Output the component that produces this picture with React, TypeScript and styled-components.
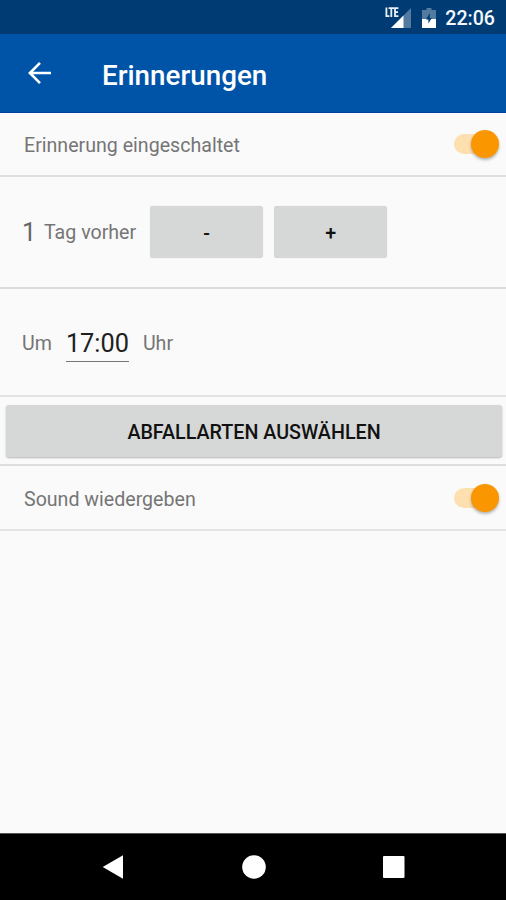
import React, { useState } from "react";
import styled, { createGlobalStyle } from "styled-components";

const GlobalStyle = createGlobalStyle`
  * { box-sizing: border-box; }
  body { margin: 0; background: #fafafa; font-family: Roboto, "Liberation Sans", sans-serif; }
  button, input { font-family: inherit; border: 0; padding: 0; margin: 0; }
`;

const Screen = styled.div`
  width: 506px;
  height: 900px;
  display: flex;
  flex-direction: column;
  overflow: hidden;
  background: #fafafa;
`;

const StatusBar = styled.header`
  height: 34px;
  flex: none;
  display: flex;
  justify-content: flex-end;
  align-items: center;
  padding: 2px 11px 0 0;
  background: #003b73;
  color: #f4f8fc;
`;

const Clock = styled.span`
  font-size: 19.6px;
  font-weight: 500;
  line-height: 24px;
  margin: 2px 0 0 9px;
`;

const Toolbar = styled.div`
  height: 79px;
  flex: none;
  display: flex;
  align-items: center;
  padding-left: 27px;
  background: #0054a8;
  border-bottom: 1px solid #004299;
`;

const BackButton = styled.button`
  display: flex;
  width: 24px;
  height: 24px;
  background: none;
`;

const Title = styled.h1`
  margin: 5px 0 0 51px;
  font-size: 27.8px;
  font-weight: 500;
  line-height: 34px;
  color: #fff;
`;

const Main = styled.main`
  flex: 1;
  display: flex;
  flex-direction: column;
`;

const Row = styled.section<{ $height: number; $line: string }>`
  height: ${(p) => p.$height}px;
  flex: none;
  display: flex;
  align-items: center;
  border-bottom: 2px solid ${(p) => p.$line};
`;

const SwitchRow = styled(Row)`
  justify-content: space-between;
  padding: 0 7px 0 24px;
`;

const FieldRow = styled(Row)`
  padding-left: 22px;
`;

const ActionRow = styled(Row)`
  padding: 0 4px 0 6px;
`;

const Label = styled.span<{ $gap?: number; $drop?: number }>`
  font-size: 19.6px;
  line-height: 24px;
  color: #757575;
  margin-left: ${(p) => p.$gap ?? 0}px;
  padding-top: ${(p) => p.$drop ?? 2}px;
  white-space: nowrap;
`;

const DayCount = styled.span`
  width: 14px;
  padding-top: 2px;
  font-size: 25.3px;
  line-height: 30px;
  color: #666;
`;

const TimeValue = styled.button`
  width: 63px;
  height: 34px;
  margin: 5px 0 0 14px;
  background: none;
  border-bottom: 1px solid #777;
  font-size: 25.3px;
  line-height: 30px;
  color: #202020;
  white-space: nowrap;
`;

const RaisedButton = styled.button`
  height: 52px;
  padding-top: 3px;
  border-radius: 3px;
  background: #d6d8d7;
  box-shadow: 0 1px 2px rgba(0, 0, 0, 0.28);
  font-size: 19.7px;
  font-weight: 500;
  line-height: 24px;
  color: #111;
`;

const StepButton = styled(RaisedButton)`
  width: 113px;
  box-shadow: 0 0 1px rgba(0, 0, 0, 0.18);
`;

const Stepper = styled.div`
  display: flex;
  gap: 11px;
  margin-left: 14px;
`;

const WideButton = styled(RaisedButton)`
  flex: 1;
  padding-top: 4px;
`;

const Track = styled.button`
  display: flex;
  align-items: center;
  justify-content: flex-end;
  width: 45px;
  height: 20px;
  border-radius: 10px;
  background: #fddfb0;
`;

const Thumb = styled.span`
  width: 28px;
  height: 28px;
  flex: none;
  border-radius: 50%;
  background: #fa9600;
  box-shadow: 0 2px 3px rgba(0, 0, 0, 0.28);
`;

const NavBar = styled.nav`
  height: 67px;
  flex: none;
  display: flex;
  align-items: center;
  justify-content: space-between;
  padding: 0 101px 0 102px;
  background: #000;
  border-top: 1px solid #555;
`;

const NavButton = styled.button`
  display: flex;
  background: none;
`;

const StatusIcons = styled.div`
  display: flex;
  gap: 11px;
`;

function Toggle({ label }: { label: string }) {
  return (
    <Track role="switch" aria-checked="true" aria-label={label}>
      <Thumb />
    </Track>
  );
}

function SignalIcon() {
  return (
    <svg width="26" height="22" viewBox="0 0 26 22">
      <path d="M26 1V21H6Z" fill="#537a9f" />
      <path d="M18.5 8.5V21H6Z" fill="#fff" />
      <path d="M0 0H14V10.5H0Z" fill="#003b73" />
      <path
        d="M1.4 .5V9.2H4.4M3.6 1.2H9M6.3 1.2V10M13.4 1.2H10V9.2H13.4M10 5.2H13"
        fill="none"
        stroke="#e8f1f8"
        strokeWidth="1.8"
      />
    </svg>
  );
}

function BatteryIcon() {
  return (
    <svg width="14" height="22" viewBox="0 0 14 22">
      <path d="M4.5 1H9.5V3H14V12H0V3H4.5Z" fill="#537a9f" />
      <path d="M0 12H14V21H0Z" fill="#fff" />
      <path d="M7.8 6L4 12.6H6.4V16.5L9.8 11H7.8Z" fill="#003b73" />
    </svg>
  );
}

export default function App() {
  const [days, setDays] = useState(1);

  return (
    <>
      <GlobalStyle />
      <Screen>
        <StatusBar>
          <StatusIcons>
            <SignalIcon />
            <BatteryIcon />
          </StatusIcons>
          <Clock>22:06</Clock>
        </StatusBar>
        <Toolbar>
          <BackButton aria-label="Zurück">
            <svg width="24" height="24" viewBox="0 0 24 24" fill="none" stroke="#fff" strokeWidth="2.6">
              <path d="M24 12H3M13 1.9L2.9 12L13 22.1" />
            </svg>
          </BackButton>
          <Title>Erinnerungen</Title>
        </Toolbar>
        <Main>
          <SwitchRow $height={64} $line="#dedede">
            <Label $drop={4}>Erinnerung eingeschaltet</Label>
            <Toggle label="Erinnerung eingeschaltet" />
          </SwitchRow>
          <FieldRow $height={112} $line="#dadada">
            <DayCount>{days}</DayCount>
            <Label $gap={8}>Tag vorher</Label>
            <Stepper>
              <StepButton onClick={() => setDays(Math.max(0, days - 1))}>-</StepButton>
              <StepButton onClick={() => setDays(days + 1)}>+</StepButton>
            </Stepper>
          </FieldRow>
          <FieldRow $height={108} $line="#e4e4e4">
            <Label $drop={3}>Um</Label>
            <TimeValue>17:00</TimeValue>
            <Label $gap={14} $drop={3}>Uhr</Label>
          </FieldRow>
          <ActionRow $height={69} $line="#dedede">
            <WideButton>ABFALLARTEN AUSWÄHLEN</WideButton>
          </ActionRow>
          <SwitchRow $height={65} $line="#e4e4e4">
            <Label $drop={4}>Sound wiedergeben</Label>
            <Toggle label="Sound wiedergeben" />
          </SwitchRow>
        </Main>
        <NavBar>
          <NavButton aria-label="Zurück">
            <svg width="22" height="26" viewBox="0 0 22 26">
              <path d="M21 1.2V24.8L.7 13Z" fill="#fff" />
            </svg>
          </NavButton>
          <NavButton aria-label="Startseite">
            <svg width="24" height="24" viewBox="0 0 24 24">
              <circle cx="12" cy="12" r="11.8" fill="#fff" />
            </svg>
          </NavButton>
          <NavButton aria-label="Übersicht">
            <svg width="22" height="22" viewBox="0 0 22 22">
              <rect width="21.5" height="22" rx="1" fill="#fff" />
            </svg>
          </NavButton>
        </NavBar>
      </Screen>
    </>
  );
}
